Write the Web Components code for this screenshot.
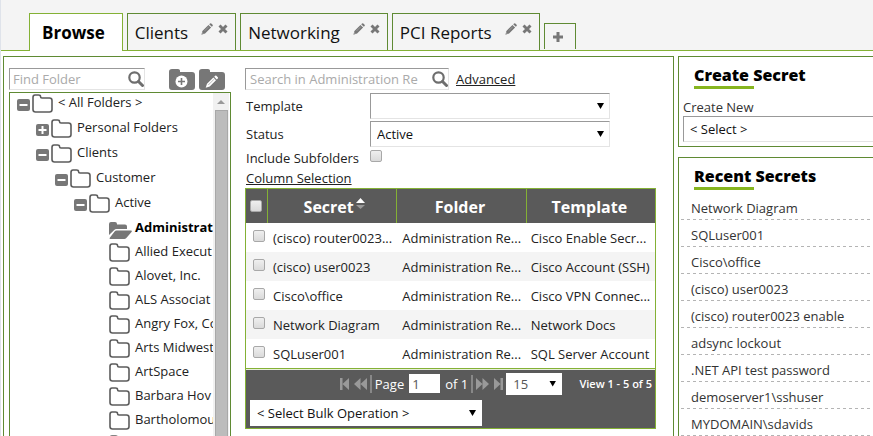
<!DOCTYPE html>
<html lang="en">
<head>
<meta charset="utf-8">
<title>Secrets</title>
<style>
  html, body { margin: 0; height: 100%; }
  body { font-family: "Open Sans", "Noto Sans", sans-serif; font-size: 13px; line-height: 18px; color: #222; background: #fff; overflow: hidden; }
</style>
</head>
<body>
<secrets-app></secrets-app>

<script>
const base = `
  * { box-sizing: border-box; }
  input, select, button { font: inherit; color: inherit; }
  button { border: 0; padding: 0; margin: 0; background: none; display: block; cursor: pointer; }
  svg { display: block; }
  a { color: inherit; }
`;

function define(name, render) {
  customElements.define(name, class extends HTMLElement {
    connectedCallback() {
      if (this.shadowRoot) return;
      this.attachShadow({ mode: "open" }).innerHTML = render(this);
    }
  });
}
const esc = s => (s || "").replace(/&/g, "&amp;").replace(/</g, "&lt;").replace(/>/g, "&gt;");

const icons = {
  pencil: [12, 12, `<path fill="#777" d="M8.2 1.2 9.1.4q.6-.5 1.2 0l1.3 1.3q.5.6 0 1.2l-.8.8zM7.5 1.9l2.6 2.6-6 6L.4 11.7l1-3.8z"/><path d="m3.6 7.900 4.300-4.300" stroke="#b5b5b5" stroke-width=".6"/><path d="m1.300 9.800 1.100 1" stroke="#f4f4f4" stroke-width=".7"/>`],
  close: [10, 10, `<path d="m1.5 1.5 7 7m0-7-7 7" stroke="#777" stroke-width="2.9"/>`],
  plus: [10, 10, `<path d="M5 0v10M0 5h10" stroke="#777" stroke-width="3"/>`],
  search: [16, 16, `<circle cx="6.5" cy="6.5" r="5.2" fill="none" stroke="#6e6e6e" stroke-width="2.2"/><path d="m10.5 10.5 4 4" stroke="#6e6e6e" stroke-width="3" stroke-linecap="round"/>`],
  folderAdd: [26, 21, `<path fill="#777" d="M3 0h6q2 0 2 2v1h12q3 0 3 3v12q0 3-3 3H3q-3 0-3-3V3q0-3 3-3z"/><circle cx="12.500" cy="12.500" r="6" fill="#fff"/><path d="M12.500 9v7M9 12.500h7" stroke="#777" stroke-width="1.600"/>`],
  folderEdit: [26, 21, `<path fill="#777" d="M3 0h6q2 0 2 2v1h12q3 0 3 3v12q0 3-3 3H3q-3 0-3-3V3q0-3 3-3z"/><path fill="#fff" d="m15.200 7.800 1-1q.6-.5 1.200 0l1.400 1.400q.5.6 0 1.200l-1 1zM14.400 8.600l2.600 2.600-6.300 6.300-4 1.300 1.300-4z"/><path d="m9.300 16 5.800-5.800" stroke="#999" stroke-width=".7"/>`],
  folder: [21, 19, `<path fill="#fff" stroke="#5c5c5c" stroke-width="1.600" d="M3 1h3.500q2 0 2 1.500T10 4h7.500Q20 4 20 6.500v9q0 2.500-2.500 2.500H3.500Q1 18 1 15.500V3.500Q1 1 3 1z"/>`],
  folderOpen: [23, 17, `<path fill="#777" d="M0 13V2q0-2 2-2h4q2 0 2 2v.5h8q2 0 2 2V7H7.500Q6 7 5 8.200z"/><path fill="#777" d="M7.500 8.500H22q1.500 0 .5 1.400L18 15.200Q17 17 15.500 17H1.500q-1.500 0-.5-1.600l4.600-5.900q.8-1 1.900-1z"/>`],
  minus: [13, 12, `<rect width="13" height="12" rx="2" fill="#777"/><path d="M2.500 6h8" stroke="#fff" stroke-width="2"/>`],
  expand: [13, 12, `<rect width="13" height="12" rx="2" fill="#777"/><path d="M2.500 6h8M6.500 2v8" stroke="#fff" stroke-width="2"/>`],
  sort: [9, 11, `<path fill="#fff" d="M4.500 0 9 5H0z"/><path fill="#999" d="M4.500 11 9 7H0z"/>`],
  first: [9, 12, `<path fill="#999" d="M0 0h2.500v12H0zM9 0v12L2.500 6z"/>`],
  prev: [13, 12, `<path fill="#999" d="M6.500 0v12L0 6zM13 0v12L6.500 6z"/>`],
  next: [13, 12, `<path fill="#999" d="M0 0v12l6.500-6zM6.500 0v12L13 6z"/>`],
  last: [9, 12, `<path fill="#999" d="M9 0H6.500v12H9zM0 0v12l6.500-6z"/>`]
};
define("ui-icon", el => {
  const [w, h, body] = icons[el.getAttribute("name")];
  return `<style>:host{display:block;flex:none}svg{display:block}</style>
    <svg width="${w}" height="${h}" viewBox="0 0 ${w} ${h}" aria-hidden="true">${body}</svg>`;
});

/* Tabs along the top; the active one opens onto the page below. */
define("tab-item", el => `<style>${base}
  :host { display: flex; align-items: flex-start; height: 37px; border: 1px solid #5f8a33; border-bottom: 0; background: #f4f4f4; padding: 0 7px; }
  :host([active]) { height: 38px; background: #fff; border-color: #84b135; padding: 0 17px 0 12px; }
  .name { font-size: 17px; line-height: 38px; color: #111; white-space: nowrap; }
  :host([active]) .name { font-weight: 700; color: #000; }
  .tools { display: flex; gap: 5px; padding: 9px 0 0 13px; }
</style>
<button class="name" role="tab"><slot></slot></button>
${el.hasAttribute("active") ? "" : `<div class="tools"><button aria-label="Rename tab"><ui-icon name="pencil"></ui-icon></button><button aria-label="Close tab"><ui-icon name="close"></ui-icon></button></div>`}`);

define("tab-strip", () => `<style>${base}
  :host { display: flex; align-items: flex-end; gap: 4px; height: 51px; background: linear-gradient(#84b135, #84b135) left bottom / 100% 1px no-repeat #f4f4f4; }
  .add { height: 26px; width: 32px; border: 1px solid #5f8a33; border-bottom: 0; display: flex; justify-content: center; padding: 8px 4px 0 0; margin-bottom: 2px; }
  ::slotted(tab-item:not([active])) { margin-bottom: 1px; }
</style><slot></slot><button class="add" aria-label="Add tab"><ui-icon name="plus"></ui-icon></button>`);

define("search-box", el => `<style>${base}
  :host { display: flex; align-items: center; height: 22px; border: 1px solid #e4e4e4; border-top-color: #999; border-left-color: #999; background: #fff; min-width: 0; }
  input { flex: 1; min-width: 0; width: 0; border: 0; outline: 0; background: none; padding: 0 0 0 ${el.getAttribute("inset") || 3}px; height: 20px; line-height: 20px; margin-right: 13px; }
  input::placeholder { color: #aaa; opacity: 1; }
</style><input type="text" aria-label="${el.getAttribute("placeholder")}" placeholder="${el.getAttribute("placeholder")}">
<button aria-label="Search"><ui-icon name="search"></ui-icon></button>`);

/* Drop-down with an optional label, either beside or above the control. */
define("drop-down", el => `<style>${base}
  :host { display: grid; align-items: center; min-width: 0; }
  :host([label]) { grid-template-columns: 125px minmax(0, 240px); }
  :host([stacked]) { grid-template-columns: minmax(0, 1fr); }
  .box { display: grid; align-items: center; min-width: 0; }
  select, .arrow { grid-area: 1 / 1; }
  select { appearance: none; width: 100%; height: 26px; margin: 0; border: 1px solid #e4e4e4; border-top-color: #999; border-left-color: #999; border-radius: 0; background: #fff; color: #111; padding: 0 20px 0 6px; outline: 0; }
  .arrow { justify-self: end; width: 7px; height: 6px; margin-right: 6px; background: #000; clip-path: polygon(0 0, 100% 0, 50% 100%); pointer-events: none; }
  :host([small]) select { height: 22px; border-color: #fff; color: #555; }
  :host([plain]) select { border-color: #fff; }
  label { padding-left: 1px; }
  :host([stacked]) label { padding: 0; color: #333; }
</style>
${el.hasAttribute("label") ? `<label for="s">${el.getAttribute("label")}</label>` : ""}
<div class="box"><select id="s" ${el.hasAttribute("label") ? "" : `aria-label="${el.getAttribute("name")}"`}><option>${esc(el.getAttribute("value"))}</option></select><span class="arrow"></span></div>`);

define("check-box", el => `<style>${base}
  :host { display: grid; align-items: center; }
  :host([label]) { grid-template-columns: 125px auto; justify-content: start; }
  input { appearance: none; width: 12px; height: 12px; margin: 0; border: 1px solid #a8a8a8; border-radius: 2px; background: linear-gradient(#efefef, #dadada); display: block; }
  label { padding-left: 1px; white-space: nowrap; }
  :host([label]) input { margin-bottom: 5px; }
</style>${el.hasAttribute("label") ? `<label for="c">${el.getAttribute("label")}</label>` : ""}<input id="c" type="checkbox" ${el.hasAttribute("label") ? "" : `aria-label="${el.getAttribute("name")}"`}>`);

define("tree-node", el => {
  const level = +el.getAttribute("level");
  const toggle = el.getAttribute("toggle");
  return `<style>${base}
  :host { display: flex; align-items: flex-start; height: 25px; padding-left: ${7 + level * 19}px; white-space: nowrap; color: #222; }
  :host([leaf]) { height: 24px; }
  :host([selected]) { font-weight: 700; color: #000; }
  .t { width: 15px; padding-top: 6px; flex: none; }
  :host([leaf]) .t { width: 16px; }
  .f { width: 26px; padding-top: 1px; flex: none; }
  :host([selected]) .f { padding-top: 4px; }
</style><div class="t">${toggle ? `<button aria-label="Toggle folder"><ui-icon name="${toggle}"></ui-icon></button>` : ""}</div>
<div class="f"><ui-icon name="${el.hasAttribute("selected") ? "folderOpen" : "folder"}"></ui-icon></div><span><slot></slot></span>`;
});

define("folder-tree", () => {
  const rows = [[0, "minus", "< All Folders >"], [1, "expand", "Personal Folders"], [1, "minus", "Clients"], [2, "minus", "Customer"], [3, "minus", "Active"]];
  const leaves = ["Allied Execut", "Alovet, Inc.", "ALS Associat", "Angry Fox, Co", "Arts Midwest", "ArtSpace", "Barbara Hov", "Bartholomou", ""];
  return `<style>${base}
  :host { display: flex; flex: 1; min-height: 0; border: 1px solid #5f8a33; border-bottom: 0; padding-right: 1px; }
  .list { flex: 1; min-width: 0; overflow: hidden; }
  .bar { width: 16px; background: #f1f1f1; display: flex; flex-direction: column; align-items: center; padding: 7px 0 0; }
  .up { width: 8px; height: 4px; background: #999; clip-path: polygon(50% 0, 100% 100%, 0 100%); flex: none; }
  .thumb { flex: 1; width: 13px; margin-top: 6px; background: #bcbcbc; border: 1px solid #a8a8a8; border-bottom: 0; }
</style><div class="list">${rows.map(r => `<tree-node level="${r[0]}" toggle="${r[1]}">${esc(r[2])}</tree-node>`).join("")}
<tree-node leaf selected level="4">Administrat</tree-node>
${leaves.map(n => `<tree-node leaf level="4">${n}</tree-node>`).join("")}</div>
<div class="bar"><span class="up"></span><span class="thumb"></span></div>`;
});

define("folder-pane", () => `<style>${base}
  :host { display: flex; flex-direction: column; min-height: 0; gap: 2px; }
  .top { display: flex; align-items: center; }
  search-box { width: 136px; margin-right: 24px; }
  .top button + button { margin-left: 4px; }
</style><div class="top"><search-box placeholder="Find Folder"></search-box>
<button aria-label="Add folder"><ui-icon name="folderAdd"></ui-icon></button><button aria-label="Edit folder"><ui-icon name="folderEdit"></ui-icon></button></div>
<folder-tree></folder-tree>`);

define("secret-grid", () => {
  const data = [["(cisco) router0023...", "Cisco Enable Secr..."], ["(cisco) user0023", "Cisco Account (SSH)"], ["Cisco\\office", "Cisco VPN Connec..."], ["Network Diagram", "Network Docs"], ["SQLuser001", "SQL Server Account"]];
  return `<style>${base}
  :host { display: block; border: 1px solid #84b135; }
  table { width: 100%; table-layout: fixed; border-collapse: separate; border-spacing: 0; }
  .c { width: 21px; }
  th { height: 34px; background: #5a5a5a; color: #fff; font-size: 16px; font-weight: 700; padding: 2px 3px 0 0; border-left: 1px solid #84b135; }
  th:first-child { border-left: 0; padding: 0 0 0 4px; }
  th:nth-child(2) { padding: 2px 0 0 4px; }
  th span { display: flex; justify-content: center; align-items: flex-start; gap: 2px; }
  td { height: 29px; padding: 0 0 0 6px; white-space: nowrap; overflow: hidden; text-overflow: ellipsis; }
  td:last-child { padding-left: 5px; }
  td:first-child { padding: 0 0 4px 7px; overflow: visible; }
  tr:nth-child(even) td { background: #f4f4f4; }
  .foot { background: #5a5a5a; color: #fff; border-top: 1px solid #84b135; padding: 3px 3px 2px 4px; box-shadow: inset 0 1px #e6edda; }
  .pager { display: grid; grid-template-columns: 1fr auto 1fr; align-items: center; height: 23px; }
  .mid { grid-column: 2; display: flex; align-items: center; }
  .mid input { width: 31px; height: 19px; border: 0; padding: 0 3px; margin: 0 5px; color: #555; }
  .sep { width: 2px; height: 18px; background: #888; margin: 0 3px; }
  .mid button + button { margin-left: 5px; }
  .mid drop-down { width: 56px; margin-left: 3px; }
  .view { justify-self: end; font-size: 11px; font-weight: 600; white-space: nowrap; }
  .bulk { width: 232px; max-width: 100%; margin-top: 5px; }
</style>
<table><thead><tr><th class="c"><check-box name="Select all"></check-box></th><th><span>Secret<ui-icon name="sort"></ui-icon></span></th><th>Folder</th><th>Template</th></tr></thead>
<tbody>${data.map(d => `<tr><td><check-box name="Select row"></check-box></td><td>${d[0]}</td><td>Administration Re...</td><td>${d[1]}</td></tr>`).join("")}</tbody></table>
<div class="foot"><div class="pager"><div class="mid">
<button aria-label="First page"><ui-icon name="first"></ui-icon></button><button aria-label="Previous page"><ui-icon name="prev"></ui-icon></button><span class="sep"></span>
<label for="p">Page</label><input id="p" type="text" value="1"><span>of 1</span><span class="sep"></span>
<button aria-label="Next page"><ui-icon name="next"></ui-icon></button><button aria-label="Last page"><ui-icon name="last"></ui-icon></button>
<drop-down small name="Rows per page" value="15"></drop-down></div><span class="view">View 1 - 5 of 5</span></div>
<drop-down class="bulk" plain name="Bulk operation" value="&lt; Select Bulk Operation &gt;"></drop-down></div>`;
});

define("secret-pane", () => `<style>${base}
  :host { display: flex; flex-direction: column; min-width: 0; }
  .top { display: flex; align-items: center; gap: 7px; margin-bottom: 3px; }
  search-box { width: 204px; }
  drop-down { margin-bottom: 2px; }
  .cols { padding-left: 1px; margin: 2px 0 1px; align-self: flex-start; }
</style><div class="top"><search-box inset="4" placeholder="Search in Administration Re"></search-box><a href="#">Advanced</a></div>
<drop-down label="Template" value=""></drop-down>
<drop-down label="Status" value="Active"></drop-down>
<check-box label="Include Subfolders"></check-box>
<a class="cols" href="#">Column Selection</a>
<secret-grid></secret-grid>`);

define("side-card", el => `<style>${base}
  :host { display: block; border: 1px solid #5f8a33; border-right: 0; padding: 8px 0 4px; min-width: 0; }
  h2 { margin: 0 0 0 15px; font-size: 16px; line-height: 21px; font-weight: 800; color: #000; white-space: nowrap; }
  h2::after { content: ""; display: block; width: 60px; height: 3px; background: #86b51f; }
</style><h2>${el.getAttribute("heading")}</h2><slot></slot>`);

define("recent-list", () => {
  const items = ["Network Diagram", "SQLuser001", "Cisco\\office", "(cisco) user0023", "(cisco) router0023 enable", "adsync lockout", ".NET API test password", "demoserver1\\sshuser", "MYDOMAIN\\sdavids"];
  return `<style>${base}
  :host { display: block; padding: 3px 0 0 2px; }
  ul { list-style: none; margin: 0; padding: 0; }
  li { height: 27px; padding: 6px 0 0 10px; background: repeating-linear-gradient(90deg, #b4b4b4 0 3px, transparent 3px 6px) left bottom / 100% 1px no-repeat; white-space: nowrap; }
  a { text-decoration: none; color: #333; }
</style><ul>${items.map(i => `<li><a href="#">${i}</a></li>`).join("")}</ul>`;
});

/* The side column continues past the window's right edge. */
define("secrets-app", () => `<style>${base}
  :host { display: flex; flex-direction: column; height: 100vh; overflow: hidden; border-left: 1px solid #dfe3ea; }
  tab-strip { flex: none; padding-left: 28px; }
  main { flex: 1; min-height: 0; display: grid; grid-template-columns: minmax(0, 671fr) minmax(0, 195fr); grid-template-rows: minmax(0, 1fr); gap: 4px; padding: 5px 0 0 2px; }
  .work { display: grid; grid-template-columns: 222px minmax(0, 1fr); grid-template-rows: minmax(0, 1fr); gap: 14px; border: 1px solid #5f8a33; border-bottom: 0; padding: 11px 17px 0 5px; }
  aside { display: flex; flex-direction: column; gap: 10px; margin-right: -30px; }
  .recent { flex: 1; }
  .create drop-down { margin: 9px 0 0 4px; }
</style>
<tab-strip><tab-item active>Browse</tab-item><tab-item>Clients</tab-item><tab-item>Networking</tab-item><tab-item>PCI Reports</tab-item></tab-strip>
<main><section class="work"><folder-pane></folder-pane><secret-pane></secret-pane></section>
<aside><side-card class="create" heading="Create Secret"><drop-down stacked label="Create New" value="&lt; Select &gt;"></drop-down></side-card>
<side-card class="recent" heading="Recent Secrets"><recent-list></recent-list></side-card></aside></main>`);
</script>
</body>
</html>
